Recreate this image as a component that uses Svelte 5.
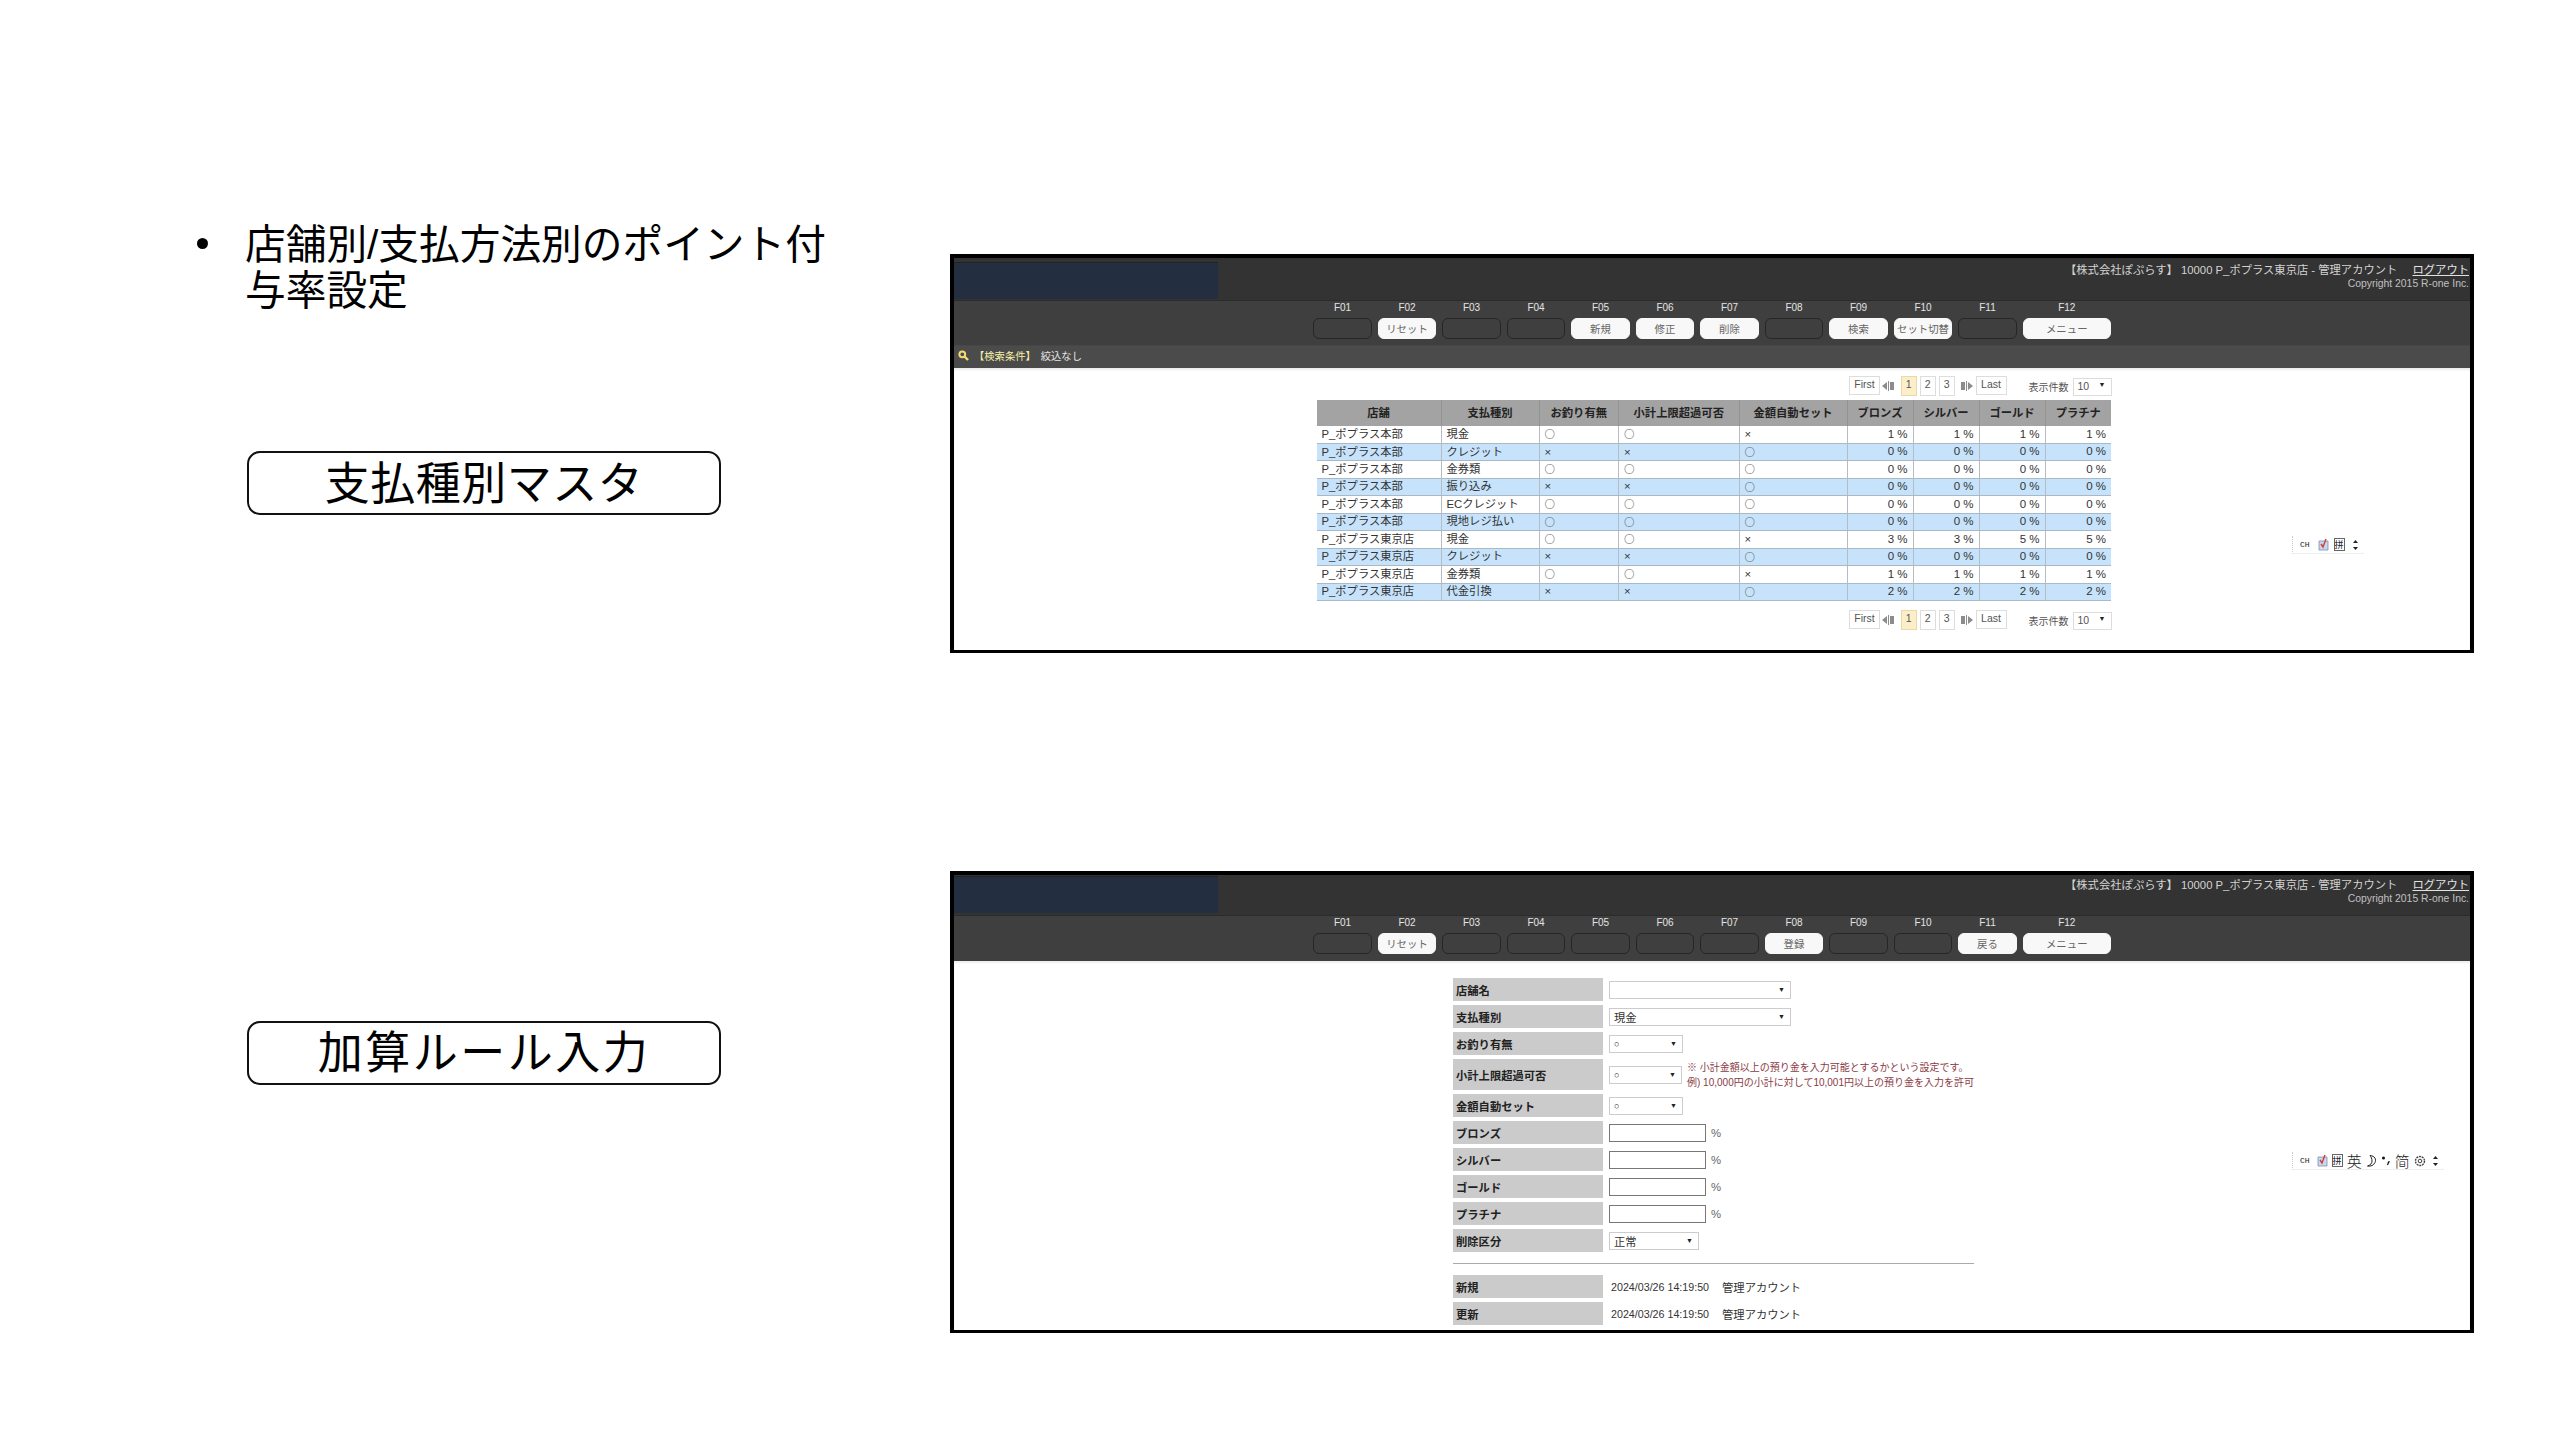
<script>
  const listKeys = ['F01','F02','F03','F04','F05','F06','F07','F08','F09','F10','F11','F12'];
  const listBtns = { F02:'リセット', F05:'新規', F06:'修正', F07:'削除', F09:'検索', F10:'セット切替', F12:'メニュー' };
  const formBtns = { F02:'リセット', F08:'登録', F11:'戻る', F12:'メニュー' };
  const H = 'P_ポプラス本部', T = 'P_ポプラス東京店', O = '〇', X = '×';
  const rows = [
    [H,'現金',O,O,X,1,1,1,1],
    [H,'クレジット',X,X,O,0,0,0,0],
    [H,'金券類',O,O,O,0,0,0,0],
    [H,'振り込み',X,X,O,0,0,0,0],
    [H,'ECクレジット',O,O,O,0,0,0,0],
    [H,'現地レジ払い',O,O,O,0,0,0,0],
    [T,'現金',O,O,X,3,3,5,5],
    [T,'クレジット',X,X,O,0,0,0,0],
    [T,'金券類',O,O,X,1,1,1,1],
    [T,'代金引換',X,X,O,2,2,2,2]
  ];
  const heads = ['店舗','支払種別','お釣り有無','小計上限超過可否','金額自動セット','ブロンズ','シルバー','ゴールド','プラチナ'];
</script>

{#snippet header()}
  <div class="head">
    <div class="logo"></div>
    <div class="who">
      <div>【株式会社ぽぷらす】 10000 P_ポプラス東京店 - 管理アカウント <a href="#top">ログアウト</a></div>
      <div class="copy">Copyright 2015 R-one Inc.</div>
    </div>
  </div>
{/snippet}

{#snippet toolbar(btns)}
  <div class="tools">
    {#each listKeys as k}
      <div class="tool" class:wide={k === 'F12'}>
        <span class="key">{k}</span>
        <button class="fbtn" class:on={btns[k]}>{btns[k] ?? ''}</button>
      </div>
    {/each}
  </div>
{/snippet}

{#snippet arrow(flip)}
  <svg class="arr" class:flip width="12" height="12" viewBox="0 0 12 12"><path d="M5 2 0 6l5 4zM6 1h1v10H6zM8 2h4v8H8z" fill="#8c8c8c" /></svg>
{/snippet}

{#snippet pager()}
  <div class="pager">
    <span class="pg word">First</span>
    {@render arrow(false)}
    <span class="pg num cur">1</span>
    <span class="pg num">2</span>
    <span class="pg num">3</span>
    {@render arrow(true)}
    <span class="pg word">Last</span>
    <span class="count">表示件数</span>
    <span class="pick">10<i>▼</i></span>
  </div>
{/snippet}

{#snippet sel(cls, text)}
  <span class="sel {cls}">{text}<i>▼</i></span>
{/snippet}

{#snippet moon()}
  <svg width="11" height="14" viewBox="0 0 11 14"><path d="M4 1.500c5 .5 6.500 4 5 7S5 12.500 1.500 12c3-1 4.500-2.500 4.500-5S5 3 4 1.500z" fill="none" stroke="#222" stroke-width="1"/></svg>
{/snippet}

{#snippet ime(full)}
  <div class="ime" class:full>
    <span class="ch">CH</span>
    <svg width="11" height="13" viewBox="0 0 11 13"><path d="M1 3h9v9H1z" fill="#c7d7ee" stroke="#7b8db0" stroke-width=".8"/><path d="M3 6l2 3 3-8" fill="none" stroke="#d23a3a" stroke-width="1.400"/></svg>
    <span class="pin">拼</span>
    {#if full}
      <span class="big">英</span>
      {@render moon()}
      <svg width="10" height="12" viewBox="0 0 10 12"><circle cx="2.500" cy="3" r="1.500" fill="#111"/><path d="M9 6 7 6.500 6 10l1 .2z" fill="#111"/></svg>
      <span class="big">简</span>
      <svg width="12" height="12" viewBox="0 0 12 12"><circle cx="6" cy="6" r="4.500" fill="none" stroke="#444" stroke-width="1.400" stroke-dasharray="2 .8"/><circle cx="6" cy="6" r="1.800" fill="none" stroke="#444"/></svg>
    {/if}
    <svg class="more" width="5" height="12" viewBox="0 0 5 12"><path d="M0 4l2.500-3L5 4zM0 8l2.500 3L5 8z" fill="#222"/></svg>
  </div>
{/snippet}

<div class="slide">
  <div class="side">
    <ul class="lead"><li>店舗別/支払方法別のポイント付与率設定</li></ul>
    <div class="tag one">支払種別マスタ</div>
    <div class="tag two">加算ルール入力</div>
  </div>

  <div class="shots">
    <section class="frame list">
      {@render header()}
      {@render toolbar(listBtns)}
      <div class="search">
        <svg width="11" height="11" viewBox="0 0 11 11"><circle cx="4.300" cy="4.300" r="2.900" fill="none" stroke="#f2dc72" stroke-width="2"/><path d="M6.500 6.500 10 10" stroke="#f2dc72" stroke-width="2.400"/></svg>
        <span class="cond">【検索条件】</span>
        <span class="none">絞込なし</span>
      </div>
      <div class="body">
        <div class="wrap">
          {@render pager()}
          <table>
            <colgroup>
              {#each [124.5,98,79.5,120.5,108,66,66,66,66] as w}<col style="width:{w}px" />{/each}
            </colgroup>
            <thead><tr>{#each heads as h}<th>{h}</th>{/each}</tr></thead>
            <tbody>
              {#each rows as r}
                <tr>
                  {#each r as c, i}
                    {#if i < 5}<td class:mark={c === O}>{c}</td>{:else}<td class="pct">{c} %</td>{/if}
                  {/each}
                </tr>
              {/each}
            </tbody>
          </table>
          <div class="lower">{@render pager()}</div>
        </div>
        {@render ime(false)}
      </div>
    </section>

    <section class="frame edit">
      {@render header()}
      {@render toolbar(formBtns)}
      <div class="body">
        <div class="form">
          <div class="row"><b>店舗名</b>{@render sel('lg','')}</div>
          <div class="row"><b>支払種別</b>{@render sel('lg txt','現金')}</div>
          <div class="row"><b>お釣り有無</b>{@render sel('sm','○')}</div>
          <div class="row tall"><b>小計上限超過可否</b>{@render sel('sm','○')}
            <p class="note">※ 小計金額以上の預り金を入力可能とするかという設定です。<br />例) 10,000円の小計に対して10,001円以上の預り金を入力を許可</p>
          </div>
          <div class="row"><b>金額自動セット</b>{@render sel('sm','○')}</div>
          {#each ['ブロンズ','シルバー','ゴールド','プラチナ'] as n}
            <div class="row"><b>{n}</b><input type="text" aria-label={n} /><span class="unit">%</span></div>
          {/each}
          <div class="row"><b>削除区分</b>{@render sel('md txt','正常')}</div>
          <hr />
          <div class="row"><b>新規</b><span class="stamp">2024/03/26 14:19:50</span><span class="stamp">管理アカウント</span></div>
          <div class="row"><b>更新</b><span class="stamp">2024/03/26 14:19:50</span><span class="stamp">管理アカウント</span></div>
        </div>
        {@render ime(true)}
      </div>
    </section>
  </div>
</div>

<style>
  :global(body) { margin: 0; background: #fff; }
  .slide {
    width: 2559px; height: 1440px; display: flex; overflow: hidden; background: #fff;
    font-family: "Liberation Sans", "Noto Sans CJK JP", sans-serif; color: #000;
  }
  .side { width: 950px; flex: none; padding-left: 245px; box-sizing: border-box; }
  .lead { margin: 0; padding: 222px 0 0; list-style: none; width: 590px; font-size: 40.700px; line-height: 46px; font-family: "Liberation Sans", "Noto Sans CJK JP", sans-serif; }
  .lead li { position: relative; }
  .lead li::before { content: ""; position: absolute; left: -48px; top: 16px; width: 11px; height: 11px; border-radius: 50%; background: #000; }
  .tag {
    box-sizing: border-box; width: 474px; height: 64px; margin-left: 2px; border: 2.500px solid #111; border-radius: 13px;
    display: flex; align-items: center; justify-content: center;
    font-size: 45px; line-height: 54px; padding-bottom: 5px; font-family: "Noto Sans CJK JP", sans-serif;
  }
  .tag.one { margin-top: 137px; letter-spacing: .5px; }
  .tag.two { margin-top: 506px; letter-spacing: 2.500px; padding-bottom: 7px; }

  .shots { width: 1524px; flex: none; padding-top: 254px; }
  .frame { box-sizing: border-box; width: 1524px; border: 4px solid #000; border-bottom-width: 3px; overflow: hidden; display: flex; flex-direction: column; background: #fff; }
  .list { height: 399px; }
  .edit { height: 462px; margin-top: 218px; }

  .head { height: 42px; flex: none; display: flex; justify-content: space-between; background: #333; color: #d2d2d2; font-size: 11.300px; box-sizing: border-box; }
  .edit .head { height: 40px; }
  .logo { width: 264px; height: 37px; margin-top: 4px; background: #232f41; border-top: 1px solid #222; box-sizing: border-box; }
  .edit .logo { height: 37px; margin-top: 1px; }
  .who { text-align: right; padding: 6px 1px 0 0; line-height: 13px; }
  .edit .who { padding-top: 4px; }
  .who a { color: #e2e2e2; margin-left: 12px; text-decoration: underline; }
  .copy { font-size: 10.400px; color: #c0c0c0; }

  .tools { flex: none; height: 46px; background: #3f3f3f; display: flex; justify-content: center; gap: 6px; box-sizing: border-box; padding-top: 1px; border-top: 1px solid #2b2b2b; }
  .tool { width: 58.500px; display: flex; flex-direction: column; align-items: center; gap: 4px; }
  .tool.wide { width: 88px; }
  .key { color: #e4e4e4; font-size: 10px; line-height: 12px; }
  .fbtn { width: 100%; height: 21px; padding: 0; border: 1px solid #262626; border-radius: 6px; background: transparent; color: #666; font: inherit; font-size: 10.400px; }
  .fbtn.on { background: #f8f8f8; border-color: #f8f8f8; }

  .search { flex: none; height: 22px; box-sizing: border-box; padding: 0 0 3px 4px; background: #4b4b4b; display: flex; align-items: center; font-size: 10.300px; box-shadow: 0 1px 2px #bbb; position: relative; }
  .cond { color: #f6f0a8; margin-left: 5px; }
  .none { color: #e6e6e6; margin-left: 5px; }

  .body { flex: 1; position: relative; background: #fff; box-shadow: inset 0 2px 2px #eee; font-size: 11.300px; color: #333; }
  .wrap { width: 795px; margin: 0 auto; padding: 8px 0 0 4px; }
  .pager { height: 20px; display: flex; justify-content: flex-end; align-items: flex-start; margin-bottom: 4px; font-size: 10.500px; color: #555; }
  .lower .pager { margin: 9px 0 0; }
  .pg { box-sizing: border-box; height: 20px; border: 1px solid #ddd; display: flex; justify-content: center; background: #fff; line-height: 15px; }
  .word { width: 31px; height: 19px; }
  .num { width: 15.500px; margin-left: 3.500px; }
  .cur { background: #fbeec8; border-color: #e8d9a8; margin-left: 7px; }
  .arr { margin: 4px 0 0 2px; }
  .arr.flip { transform: scaleX(-1); margin: 4px 3px 0 6px; }
  .count { margin: 3px 4px 0 22px; font-size: 10px; }
  .pick { box-sizing: border-box; width: 39px; height: 18px; margin-top: 2px; border: 1px solid #ddd; padding: 1px 0 0 4px; position: relative; }
  .pick i, .sel i { position: absolute; right: 5px; top: 2px; font-style: normal; font-size: 7px; color: #222; }

  table { border-collapse: collapse; table-layout: fixed; width: 794.500px; font-size: 11.300px; color: #333; }
  th { height: 26px; padding: 0 0 2px; box-sizing: border-box; background: #a3a3a3; color: #222; font-weight: 700; border-right: 1px solid #939393; }
  td { height: 17.470px; padding: 0 0 0 5px; border-right: 1px solid #b5bcc4; box-sizing: border-box; white-space: nowrap; line-height: 1; }
  td.mark { color: #5f5f5f; font-size: 10.500px; font-weight: 300; }
  th:last-child, td:last-child { border-right: 0; }
  tbody tr:nth-child(even) td { background: #c6e3fb; border-top: 1px solid #a9b9c6; border-bottom: 1px solid #a9b9c6; }
  td.pct { text-align: right; padding: 0 5px 0 0; font-size: 11.500px; }

  .form { width: 521px; margin: 0 auto; padding: 17px 0 0 3px; display: flex; flex-direction: column; gap: 4px; }
  .row { min-height: 23px; display: flex; align-items: center; }
  .row.tall { min-height: 31px; }
  .row b { width: 150px; flex: none; align-self: stretch; display: flex; align-items: center; padding-left: 3px; box-sizing: border-box; background: #cbcbcb; color: #222; margin-right: 6px; font-size: 11.300px; }
  .sel { box-sizing: border-box; display: block; height: 18px; border: 1px solid #ccc; position: relative; padding: 2px 0 0 4px; font-size: 9px; line-height: 12px; color: #222; background: #fff; }
  .sel.txt { font-size: 11.300px; color: #333; padding-top: 3px; }
  .sm { width: 74px; }
  .md { width: 90px; }
  .lg { width: 182px; }
  input { box-sizing: border-box; width: 97px; height: 18px; border: 1px solid #777; background: #fff; padding: 0; }
  .unit { margin-left: 5px; color: #666; }
  .note { margin: 0 0 0 5px; color: #8a3a45; font-size: 10px; line-height: 15px; white-space: nowrap; }
  hr { width: 521px; margin: 7px 0 7px; border: 0; border-top: 1px solid #aaa; }
  .stamp { margin: 0 13px 0 2px; font-size: 10.700px; }
  .stamp + .stamp { margin-left: 0; font-size: 11.300px; }

  .ime { position: absolute; top: 168px; left: 1338px; display: flex; align-items: center; gap: 5px; height: 17px; padding: 0 6px 0 7px; border-left: 1px dotted #ccc; border-bottom: 1px solid #eee; color: #222; font-size: 9px; }
  .ime.full { top: 191px; gap: 4px; }
  .ch { font-family: "Liberation Mono", monospace; font-size: 8px; margin-right: 3px; }
  .pin { border: 1px solid #666; font-size: 9px; line-height: 11px; font-family: "Noto Sans CJK SC", sans-serif; }
  .big { font-size: 15px; line-height: 15px; font-weight: 300; font-family: "Noto Sans CJK SC", sans-serif; }
  .more { margin-left: 3px; }
</style>
